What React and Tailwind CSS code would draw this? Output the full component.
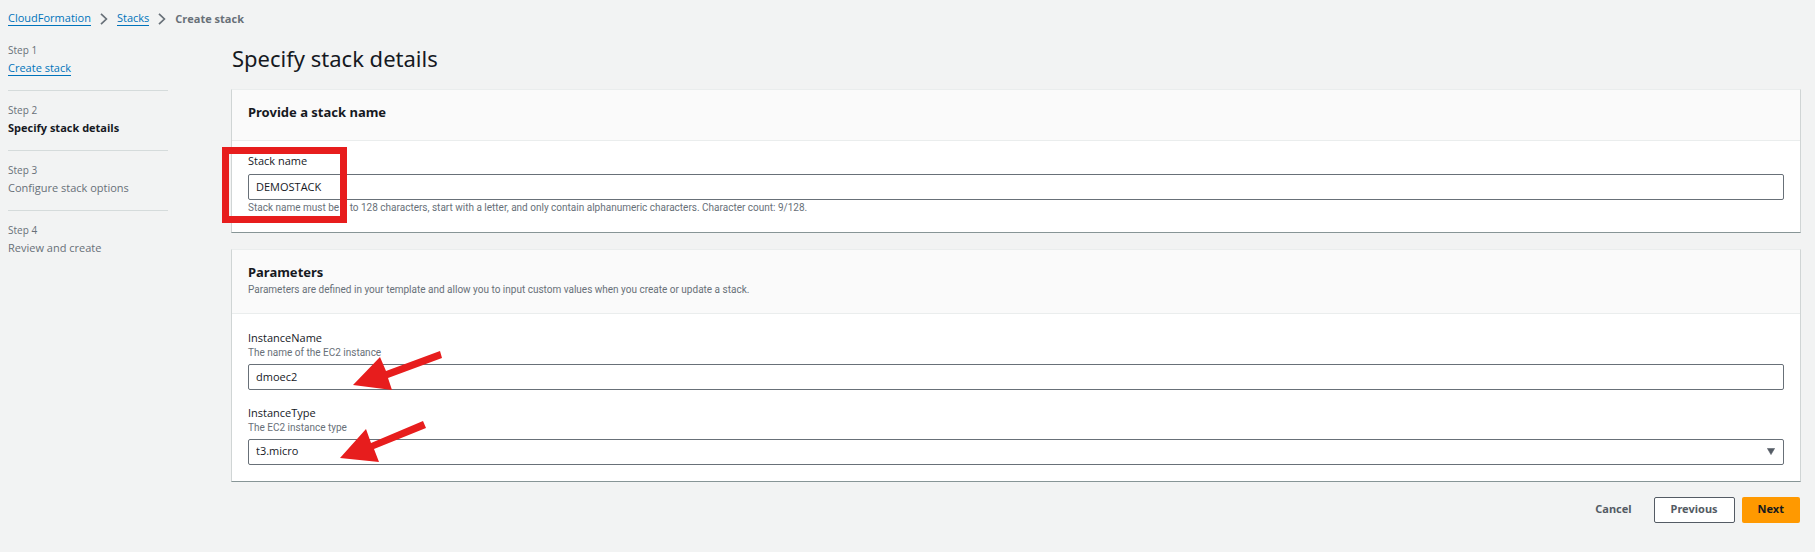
const steps = [
  { label: "Step 1", title: "Create stack", state: "done" },
  { label: "Step 2", title: "Specify stack details", state: "current" },
  { label: "Step 3", title: "Configure stack options", state: "todo" },
  { label: "Step 4", title: "Review and create", state: "todo" },
];

const fieldClass =
  "block h-[26px] w-full appearance-none rounded-[2px] border border-[#687078] bg-white px-[7px] pb-px text-[11px] text-[#16191f]";

const hintClass = "font-['Roboto',sans-serif] text-[10px] text-[#687078]";

function Separator() {
  return (
    <svg viewBox="0 0 8 12" className="h-3 w-2" fill="none" stroke="#687078" strokeWidth="1.7" aria-hidden="true">
      <path d="M1 0.8 6.4 6 1 11.2" />
    </svg>
  );
}

function StepTitle({ step }) {
  if (step.state === "done") {
    return (
      <a href="#create" className="border-b border-[#0073bb] leading-[14px] text-[#0073bb]">
        {step.title}
      </a>
    );
  }
  if (step.state === "current") {
    return <span className="font-bold text-[#16191f]">{step.title}</span>;
  }
  return <span className="text-[#687078]">{step.title}</span>;
}

function Panel({ title, description, children }) {
  return (
    <section className="relative border border-t-[#eaeded] border-r-[#d0d5d5] border-b-[#879596] border-l-[#d0d5d5] bg-white">
      <header className={`border-b border-[#eaeded] bg-[#fafafa] px-4 pt-3 ${description ? "pb-4" : "pb-[18px]"}`}>
        <h2 className="font-['Noto_Sans',sans-serif] text-[13px] leading-5 font-bold text-[#16191f]">{title}</h2>
        {description && <p className={`leading-[15px] ${hintClass}`}>{description}</p>}
      </header>
      <div className="px-4 pt-[11px] pb-4">{children}</div>
    </section>
  );
}

function Arrow({ className, points }) {
  return (
    <svg viewBox="0 0 90 42" className={`pointer-events-none absolute h-[42px] w-[90px] ${className}`} aria-hidden="true">
      <polygon points={points} fill="#e71d1d" />
    </svg>
  );
}

export default function App() {
  return (
    <div className="min-h-screen bg-[#f2f3f3] pr-[14px] pb-7 pl-2 font-['Open_Sans',sans-serif] text-[11px]">
      <nav aria-label="Breadcrumb" className="pt-[11px]">
        <ol className="flex items-center gap-[9px] leading-[14px]">
          <li>
            <a href="#home" className="block border-b border-[#0073bb] text-[#0073bb]">CloudFormation</a>
          </li>
          <li><Separator /></li>
          <li>
            <a href="#stacks" className="block border-b border-[#0073bb] text-[#0073bb]">Stacks</a>
          </li>
          <li><Separator /></li>
          <li className="font-bold text-[#687078]">Create stack</li>
        </ol>
      </nav>

      <div className="flex gap-[63px]">
        <aside className="w-40 shrink-0 pt-[15px]">
          <ol className="divide-y divide-[#d5dbdb]">
            {steps.map((step) => (
              <li key={step.label} className="flex flex-col items-start pb-[13px] not-first:pt-[10px]">
                <span className="text-[10px] leading-[18px] text-[#687078]">{step.label}</span>
                <div className="flex h-[18px] items-center">
                  <StepTitle step={step} />
                </div>
              </li>
            ))}
          </ol>
        </aside>

        <main className="min-w-0 flex-1 pt-4">
          <h1 className="pl-px font-['Noto_Sans',sans-serif] text-[22px] leading-8 text-[#16191f]">Specify stack details</h1>

          <form className="mt-[15px]" onSubmit={(e) => e.preventDefault()}>
            <div className="flex flex-col gap-4">
              <Panel title="Provide a stack name">
                <label htmlFor="stack" className="block pb-[5px] leading-[17px] text-[#16191f]">Stack name</label>
                <input id="stack" defaultValue="DEMOSTACK" className={fieldClass} />
                <p className={`leading-4 ${hintClass}`}>
                  Stack name must be 1 to 128 characters, start with a letter, and only contain alphanumeric characters. Character count: 9/128.
                </p>
                <div className="pointer-events-none absolute top-[57px] -left-[10px] h-[76px] w-[125px] border-7 border-[#e71d1d]" />
              </Panel>

              <Panel
                title="Parameters"
                description="Parameters are defined in your template and allow you to input custom values when you create or update a stack."
              >
                <label htmlFor="name" className="block pt-1 leading-[17px] text-[#16191f]">InstanceName</label>
                <p className={`pb-1 leading-[14px] ${hintClass}`}>The name of the EC2 instance</p>
                <input id="name" defaultValue="dmoec2" className={fieldClass} />
                <label htmlFor="type" className="block pt-[14px] leading-[17px] text-[#16191f]">InstanceType</label>
                <p className={`pb-1 leading-[14px] ${hintClass}`}>The EC2 instance type</p>
                <div className="relative">
                  <select id="type" defaultValue="t3.micro" className={fieldClass}>
                    <option>t3.micro</option>
                  </select>
                  <svg viewBox="0 0 8 7" className="pointer-events-none absolute top-[9px] right-[9px] h-[7px] w-2" aria-hidden="true">
                    <path d="M0.4 0.4h7.2L4 6.6z" fill="#545b64" stroke="#545b64" strokeWidth="0.6" />
                  </svg>
                </div>
                <Arrow className="top-[101px] left-[121px]" points="0,34 27,6 33,20 87,0 89,7 35,27 39,39" />
                <Arrow className="top-[171px] left-[108px]" points="0,37 26,8 31,22 83,0 86,7 34,28 39,41" />
              </Panel>
            </div>

            <div className="mt-[15px] flex justify-end pr-px font-['Noto_Sans',sans-serif] font-bold">
              <button type="button" className="mr-[22px] h-[26px] pb-px text-[#545b64]">Cancel</button>
              <button type="button" className="mr-[7px] h-[26px] rounded-[2px] border border-[#545b64] bg-white px-4 pb-px text-[#545b64]">
                Previous
              </button>
              <button type="submit" className="h-[26px] rounded-[2px] bg-[#ff9900] px-4 pb-px text-[#16191f]">Next</button>
            </div>
          </form>
        </main>
      </div>
    </div>
  );
}
